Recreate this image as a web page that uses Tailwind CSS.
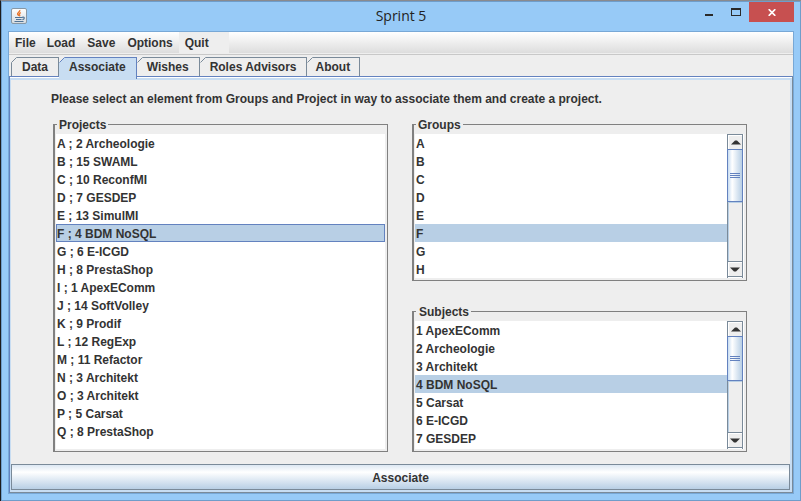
<!DOCTYPE html>
<html lang="en">
<head>
<meta charset="utf-8">
<title>Sprint 5</title>
<script src="https://cdn.jsdelivr.net/npm/@tailwindcss/browser@4"></script>
</head>
<body class="flex h-screen flex-col overflow-hidden border-l border-t border-l-[#1c1c1c] border-t-[#8a8a8e] bg-[#97caf7] font-['Liberation_Sans',Arial,sans-serif] text-xs font-bold text-[#333333]">
<div class="flex min-h-0 flex-1 flex-col border border-[#6f9dca] px-[6px] pb-[6px]">

  <header class="relative flex h-[29px] shrink-0 items-start justify-between pl-[3px]">
    <svg class="mt-[6px] h-4 w-4" viewBox="0 0 16 16" aria-hidden="true">
      <defs><linearGradient id="tile" x1="0" y1="0" x2="0" y2="1"><stop offset="0" stop-color="#fff"/><stop offset="1" stop-color="#d5dbe0"/></linearGradient></defs>
      <rect x=".5" y=".5" width="15" height="15" rx="1.5" fill="url(#tile)" stroke="#8797a5"/>
      <path d="M8.800 2c.7 1.800-3 2.600-2.200 4.200.3.700 1 1.100 1.200 1.700M9.800 4.600c-1.800.8-2 1.600-1.200 2.400.4.400.1.900-.3 1.200" fill="none" stroke="#e8762c" stroke-width="1.300"/>
      <path d="M4 9.500h7.500M5 11.500h5.500M3.500 13.500h9M11.300 9.300c2.600-.8 2.600 1.900.1 2.300" fill="none" stroke="#4f7396" stroke-width="1.200"/>
    </svg>
    <h1 class="absolute inset-x-0 top-[4px] text-center font-['Open_Sans',sans-serif] text-sm font-normal leading-5 text-[#222222]">Sprint 5</h1>
    <div class="relative flex">
      <button class="flex h-5 w-[27px] items-end justify-center pb-[6px]" aria-label="Minimize"><span class="h-[2px] w-2 bg-[#2a2a2a]"></span></button>
      <button class="flex h-5 w-[27px] items-start justify-center pt-[6px]" aria-label="Maximize"><span class="h-2 w-[10px] border border-t-2 border-[#2a2a2a]"></span></button>
      <button class="flex h-5 w-[45px] items-center justify-center bg-[#c75050]" aria-label="Close">
        <svg class="h-[7px] w-2" viewBox="0 0 8 7"><path d="M.7.200 7.300 6.800M7.300.200.7 6.800" stroke="#fff" stroke-width="1.700"/></svg>
      </button>
    </div>
  </header>

  <div class="flex min-h-0 flex-1 flex-col border border-[#78a8d6] bg-[#eeeeee]">
    <nav class="flex h-[21px] shrink-0 bg-linear-to-b from-white to-[#dddddd]" aria-label="Main menu">
      <button class="pl-[6px] pr-[5px]">File</button>
      <button class="px-[6px]">Load</button>
      <button class="px-[6px]">Save</button>
      <button class="px-[6px]">Options</button>
      <button class="bg-[#eeeeee] pl-[6px] pr-5">Quit</button>
    </nav>
    <div class="h-[2px] shrink-0 border-b border-[#c8c8c8]"></div>

    <div class="relative z-10 flex h-[21px] shrink-0 items-stretch pl-[2px] pt-[2px]" role="tablist">
      <button role="tab" class="relative border-x border-t border-[#7a8a99] px-[10px]">Data
        <svg class="absolute -left-px -top-px h-[6px] w-[6px]" viewBox="0 0 6 6"><path d="M0 0h6L0 6z" fill="#eee"/><path d="M.5 5.500 5.500.5" stroke="#7a8a99"/></svg></button>
      <button role="tab" aria-selected="true" class="relative -mb-[3px] border-r border-t border-[#6382bf] bg-[#c8ddf2] px-[10px] pb-[3px]">Associate
        <svg class="absolute -top-px left-0 h-[6px] w-[6px]" viewBox="0 0 6 6"><path d="M0 0h6L0 6z" fill="#eee"/><path d="M.5 5.500 5.500.5" stroke="#6382bf"/></svg></button>
      <button role="tab" class="relative border-r border-t border-[#7a8a99] px-[10px]">Wishes
        <svg class="absolute -top-px left-0 h-[6px] w-[6px]" viewBox="0 0 6 6"><path d="M0 0h6L0 6z" fill="#eee"/><path d="M.5 5.500 5.500.5" stroke="#7a8a99"/></svg></button>
      <button role="tab" class="relative border-r border-t border-[#7a8a99] pl-[10px] pr-[9px]">Roles Advisors
        <svg class="absolute -top-px left-0 h-[6px] w-[6px]" viewBox="0 0 6 6"><path d="M0 0h6L0 6z" fill="#eee"/><path d="M.5 5.500 5.500.5" stroke="#7a8a99"/></svg></button>
      <button role="tab" class="relative border-r border-t border-[#7a8a99] px-[9px]">About
        <svg class="absolute -top-px left-0 h-[6px] w-[6px]" viewBox="0 0 6 6"><path d="M0 0h6L0 6z" fill="#eee"/><path d="M.5 5.500 5.500.5" stroke="#7a8a99"/></svg></button>
    </div>

    <main class="flex min-h-0 flex-1 flex-col border border-[#7a8a99] border-l-[#6382bf] border-t-[#6382bf]">
      <div class="flex min-h-0 flex-1 flex-col border-t border-white">
      <div class="flex min-h-0 flex-1 flex-col border-2 border-l border-[#c8ddf2]">
        <p class="shrink-0 pb-2 pl-10 pt-[11px] leading-4">Please select an element from Groups and Project in way to associate them and create a project.</p>
        <div class="grid min-h-0 flex-1 grid-cols-2 gap-6 pb-3 pl-[42px] pr-[43px]">
          <fieldset class="flex min-w-0 flex-col border border-l-2 border-[#808080] pb-[2px] pl-px pr-[2px] pt-px">
            <legend class="ml-px px-[2px] pt-[2px] leading-4"><label for="projects">Projects</label></legend>
            <select id="projects" size="17" class="h-full w-full appearance-none overflow-hidden bg-white outline-none [scrollbar-width:none]">
              <option class="h-[18px] px-px pb-0 pt-[3px] font-bold text-[#333333]">A ; 2 Archeologie</option>
              <option class="h-[18px] px-px pb-0 pt-[3px] font-bold text-[#333333]">B ; 15 SWAML</option>
              <option class="h-[18px] px-px pb-0 pt-[3px] font-bold text-[#333333]">C ; 10 ReconfMI</option>
              <option class="h-[18px] px-px pb-0 pt-[3px] font-bold text-[#333333]">D ; 7 GESDEP</option>
              <option class="h-[18px] px-px pb-0 pt-[3px] font-bold text-[#333333]">E ; 13 SimulMI</option>
              <option selected class="h-[18px] border border-[#6382bf] px-0 pb-0 pt-[2px] font-bold text-[#333333] checked:bg-[linear-gradient(#b8cfe5,#b8cfe5)]">F ; 4 BDM NoSQL</option>
              <option class="h-[18px] px-px pb-0 pt-[3px] font-bold text-[#333333]">G ; 6 E-ICGD</option>
              <option class="h-[18px] px-px pb-0 pt-[3px] font-bold text-[#333333]">H ; 8 PrestaShop</option>
              <option class="h-[18px] px-px pb-0 pt-[3px] font-bold text-[#333333]">I ; 1 ApexEComm</option>
              <option class="h-[18px] px-px pb-0 pt-[3px] font-bold text-[#333333]">J ; 14 SoftVolley</option>
              <option class="h-[18px] px-px pb-0 pt-[3px] font-bold text-[#333333]">K ; 9 Prodif</option>
              <option class="h-[18px] px-px pb-0 pt-[3px] font-bold text-[#333333]">L ; 12 RegExp</option>
              <option class="h-[18px] px-px pb-0 pt-[3px] font-bold text-[#333333]">M ; 11 Refactor</option>
              <option class="h-[18px] px-px pb-0 pt-[3px] font-bold text-[#333333]">N ; 3 Architekt</option>
              <option class="h-[18px] px-px pb-0 pt-[3px] font-bold text-[#333333]">O ; 3 Architekt</option>
              <option class="h-[18px] px-px pb-0 pt-[3px] font-bold text-[#333333]">P ; 5 Carsat</option>
              <option class="h-[18px] px-px pb-0 pt-[3px] font-bold text-[#333333]">Q ; 8 PrestaShop</option>
            </select>
          </fieldset>

          <div class="flex min-h-0 min-w-0 flex-col gap-[21px]">
            <fieldset class="min-w-0 shrink-0 border border-l-2 border-[#808080] pb-[2px] pl-px pr-[2px] pt-px">
              <legend class="ml-px px-[2px] pt-[2px] leading-4"><label for="groups">Groups</label></legend>
              <div class="flex h-36">
                <select id="groups" size="8" class="h-full min-w-0 flex-1 appearance-none overflow-hidden bg-white outline-none [scrollbar-width:none]">
                  <option class="h-[18px] px-px pb-0 pt-[3px] font-bold text-[#333333]">A</option>
                  <option class="h-[18px] px-px pb-0 pt-[3px] font-bold text-[#333333]">B</option>
                  <option class="h-[18px] px-px pb-0 pt-[3px] font-bold text-[#333333]">C</option>
                  <option class="h-[18px] px-px pb-0 pt-[3px] font-bold text-[#333333]">D</option>
                  <option class="h-[18px] px-px pb-0 pt-[3px] font-bold text-[#333333]">E</option>
                  <option selected class="h-[18px] px-px pb-0 pt-[3px] font-bold text-[#333333] checked:bg-[linear-gradient(#b8cfe5,#b8cfe5)]">F</option>
                  <option class="h-[18px] px-px pb-0 pt-[3px] font-bold text-[#333333]">G</option>
                  <option class="h-[18px] px-px pb-0 pt-[3px] font-bold text-[#333333]">H</option>
                </select>
                <div class="flex w-[17px] flex-col border-r border-r-white">
                  <div class="flex flex-1 flex-col border-x border-t border-[#7a8a99]">
                    <button class="flex h-[14px] items-center justify-center border-l border-t border-white" aria-label="Scroll groups up"><svg class="h-[5px] w-[10px]" viewBox="0 0 10 5"><path d="M0 4.500 4 .5h2l4 4z" fill="#333"/></svg></button>
                    <div class="-mx-px flex h-[53px] flex-col items-center justify-center gap-px border border-[#6382bf] bg-linear-to-r from-[#c8ddf2] via-white via-30% to-[#b8cfe5]"><i class="h-px w-[10px] bg-[#6382bf]"></i><i class="h-px w-[10px] bg-[#6382bf]"></i><i class="h-px w-[10px] bg-[#6382bf]"></i></div>
                    <div class="flex-1 border-l border-t border-[#b8cfe5]"></div>
                    <button class="flex h-4 items-center justify-center border-y border-[#7a8a99] shadow-[inset_1px_1px_0_#fff]" aria-label="Scroll groups down"><svg class="h-[5px] w-[10px]" viewBox="0 0 10 5"><path d="M0 .5 4 4.500h2l4-4z" fill="#333"/></svg></button>
                    <div class="h-px bg-white"></div>
                  </div>
                </div>
              </div>
            </fieldset>

            <fieldset class="min-h-0 min-w-0 flex-1 border border-l-2 border-[#808080] pb-[2px] pl-px pr-[2px] pt-px">
              <legend class="ml-px pl-[3px] pr-[2px] pt-[2px] leading-4"><label for="subjects">Subjects</label></legend>
              <div class="flex h-full">
                <select id="subjects" size="7" class="h-full min-w-0 flex-1 appearance-none overflow-hidden bg-white outline-none [scrollbar-width:none]">
                  <option class="h-[18px] px-px pb-0 pt-[3px] font-bold text-[#333333]">1 ApexEComm</option>
                  <option class="h-[18px] px-px pb-0 pt-[3px] font-bold text-[#333333]">2 Archeologie</option>
                  <option class="h-[18px] px-px pb-0 pt-[3px] font-bold text-[#333333]">3 Architekt</option>
                  <option selected class="h-[18px] px-px pb-0 pt-[3px] font-bold text-[#333333] checked:bg-[linear-gradient(#b8cfe5,#b8cfe5)]">4 BDM NoSQL</option>
                  <option class="h-[18px] px-px pb-0 pt-[3px] font-bold text-[#333333]">5 Carsat</option>
                  <option class="h-[18px] px-px pb-0 pt-[3px] font-bold text-[#333333]">6 E-ICGD</option>
                  <option class="h-[18px] px-px pb-0 pt-[3px] font-bold text-[#333333]">7 GESDEP</option>
                </select>
                <div class="flex w-[17px] flex-col border-r border-r-white">
                  <div class="flex flex-1 flex-col border-x border-t border-[#7a8a99]">
                    <button class="flex h-[14px] items-center justify-center border-l border-t border-white" aria-label="Scroll subjects up"><svg class="h-[5px] w-[10px]" viewBox="0 0 10 5"><path d="M0 4.500 4 .5h2l4 4z" fill="#333"/></svg></button>
                    <div class="-mx-px flex h-[45px] flex-col items-center justify-center gap-px border border-[#6382bf] bg-linear-to-r from-[#c8ddf2] via-white via-30% to-[#b8cfe5]"><i class="h-px w-[10px] bg-[#6382bf]"></i><i class="h-px w-[10px] bg-[#6382bf]"></i><i class="h-px w-[10px] bg-[#6382bf]"></i></div>
                    <div class="flex-1 border-l border-t border-[#b8cfe5]"></div>
                    <button class="flex h-4 items-center justify-center border-y border-[#7a8a99] shadow-[inset_1px_1px_0_#fff]" aria-label="Scroll subjects down"><svg class="h-[5px] w-[10px]" viewBox="0 0 10 5"><path d="M0 .5 4 4.500h2l4-4z" fill="#333"/></svg></button>
                    <div class="h-px bg-white"></div>
                  </div>
                </div>
              </div>
            </fieldset>
          </div>
        </div>
        <button class="h-[26px] shrink-0 border border-[#7a8a99] bg-linear-to-b from-[#dde8f3] via-white via-30% to-[#b8cfe5] pt-[2px]">Associate</button>
      </div>
      </div>
    </main>
  </div>
</div>
</body>
</html>
